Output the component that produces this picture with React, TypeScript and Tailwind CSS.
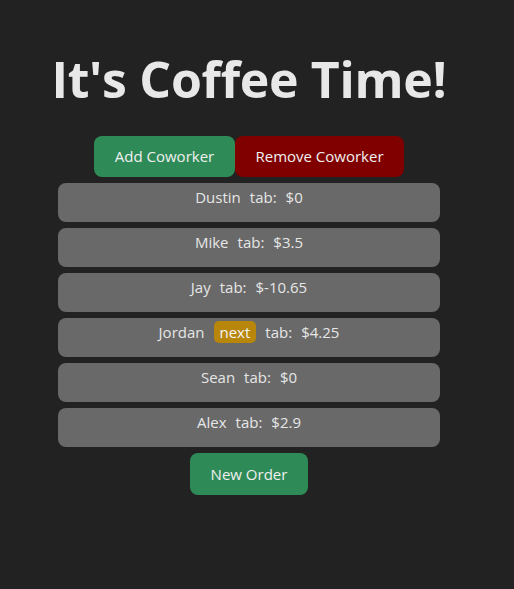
const coworkers = [
  { name: "Dustin", tab: "0", next: false },
  { name: "Mike", tab: "3.5", next: false },
  { name: "Jay", tab: "-10.65", next: false },
  { name: "Jordan", tab: "4.25", next: true },
  { name: "Sean", tab: "0", next: false },
  { name: "Alex", tab: "2.9", next: false },
];

export default function App() {
  return (
    <div
      className="min-h-[589px] bg-[#222222] text-[#e6e6e6] pr-[16px]"
      style={{ fontFamily: '"Open Sans", "Noto Sans", sans-serif' }}
    >
      <div className="flex flex-col items-center pt-[42px]">
        <h1 className="text-[50px] font-bold leading-[74px] tracking-[-0.3px] text-[#e8e8e8]">
          It's Coffee Time!
        </h1>

        <div className="flex mt-[20px]">
          <button className="h-[41px] w-[141px] rounded-[8px] bg-[#2e8b57] text-[15px] text-[#f0f0f0]">
            Add Coworker
          </button>
          <button className="h-[41px] w-[169px] rounded-[8px] bg-[#800000] text-[15px] text-[#f0f0f0]">
            Remove Coworker
          </button>
        </div>

        <div className="flex flex-col gap-[6px] mt-[6px] w-[382px]">
          {coworkers.map((c) => (
            <div
              key={c.name}
              className="h-[39px] rounded-[8px] bg-[#696969] flex justify-center items-start pt-[3px] text-[15px] leading-[22px] gap-[9px]"
            >
              <span>{c.name}</span>
              {c.next && (
                <span className="rounded-[5px] bg-[#b8860b] px-[6px] text-[#f5f5f5]">next</span>
              )}
              <span>tab:</span>
              <span>${c.tab}</span>
            </div>
          ))}
        </div>

        <button className="mt-[6px] h-[42px] w-[118px] rounded-[8px] bg-[#2e8b57] text-[15px] text-[#f0f0f0]">
          New Order
        </button>
      </div>
    </div>
  );
}
